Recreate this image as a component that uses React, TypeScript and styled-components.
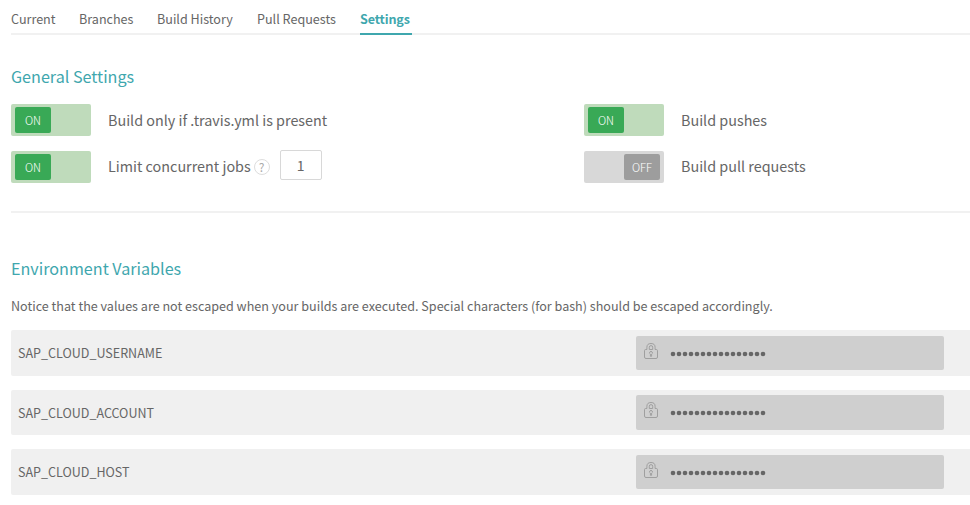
import React from "react";
import styled, { createGlobalStyle } from "styled-components";

const GlobalStyle = createGlobalStyle`
  *, *::before, *::after { box-sizing: border-box; }
  html, body { margin: 0; background: #fff; overflow: hidden; }
  body {
    font-family: "Source Sans Pro", "Noto Sans CJK SC", "Open Sans", sans-serif;
    font-size: 12.58px;
    color: #666;
  }
`;

const Page = styled.main`
  width: 970px;
  height: 505px;
  padding-left: 11px;
  overflow: hidden;
`;

const Tabs = styled.nav`
  display: flex;
  height: 35px;
  border-bottom: 2px solid #f1f1f1;
`;

const Tab = styled.a<{ $width: number; $active?: boolean }>`
  flex: none;
  width: ${(p) => p.$width}px;
  height: 35px;
  margin-right: 24px;
  padding-top: 9px;
  line-height: 20px;
  white-space: nowrap;
  letter-spacing: ${(p) => (p.$active ? -0.15 : 0)}px;
  font-weight: ${(p) => (p.$active ? 600 : 400)};
  color: ${(p) => (p.$active ? "#3fa7ae" : "#666")};
  border-bottom: 2px solid ${(p) => (p.$active ? "#3fa7ae" : "transparent")};
`;

const General = styled.section`
  height: 178px;
  padding-top: 29px;
  border-bottom: 2px solid #f1f1f1;
`;

const Heading = styled.h2`
  margin: 0;
  height: 24px;
  line-height: 24px;
  font-size: 16.15px;
  font-weight: 400;
  color: #3fa7ae;
`;

const SettingsGrid = styled.div`
  display: grid;
  grid-template-columns: 573px 1fr;
  row-gap: 15px;
  margin-top: 16px;
`;

const Setting = styled.div`
  display: flex;
  height: 32px;
  align-items: center;

  &:nth-child(n + 3) > span:nth-child(2) {
    padding-bottom: 2px;
  }
`;

const Switch = styled.button<{ $on: boolean }>`
  display: flex;
  flex: none;
  justify-content: ${(p) => (p.$on ? "flex-start" : "flex-end")};
  width: 80px;
  height: 32px;
  padding: 3px 4px;
  border: 0;
  border-radius: 2px;
  background: ${(p) => (p.$on ? "#bfdbbb" : "#d8d8d8")};
`;

const Knob = styled.span<{ $on: boolean }>`
  width: 36px;
  height: 26px;
  border-radius: 2px;
  background: ${(p) => (p.$on ? "#39a956" : "#9d9d9d")};
  color: #fff;
  font: 300 11.2px/26px "Source Sans Pro", "Noto Sans CJK SC", sans-serif;
  text-align: center;
`;

const Label = styled.span`
  margin-left: 17px;
  font-size: 14.37px;
  line-height: 30px;
  white-space: nowrap;
`;

const Help = styled.span`
  width: 16px;
  height: 16px;
  margin-left: 3px;
  border: 1px solid #ddd;
  border-radius: 50%;
  font-size: 12px;
  line-height: 14px;
  text-align: center;
  color: #aaa;
`;

const JobLimit = styled.input`
  width: 42px;
  height: 30px;
  margin: 0 0 4px 10px;
  padding: 0;
  border: 1px solid #d8d8d8;
  border-radius: 2px;
  background: #fff;
  color: #666;
  font: 400 14px "Source Sans Pro", "Noto Sans CJK SC", sans-serif;
  text-align: center;
`;

const Environment = styled.section`
  padding-top: 43px;
`;

const Notice = styled.p`
  margin: 16px 0 13px;
  height: 21px;
  line-height: 20px;
  white-space: nowrap;
`;

const Variables = styled.ul`
  display: flex;
  flex-direction: column;
  gap: 14px;
  margin: 0;
  padding: 0;
  list-style: none;
`;

const Variable = styled.li`
  display: flex;
  justify-content: space-between;
  height: 45.6px;
  padding: 5.6px 26px 5.6px 7px;
  border-radius: 2px 0 0 2px;
  background: #f0f0f0;
`;

const Name = styled.span`
  margin-top: 0.4px;
  font-size: 12.54px;
  line-height: 34px;
`;

const Secret = styled.div`
  display: flex;
  width: 308px;
  height: 34.4px;
  padding-left: 8px;
  border-radius: 2px;
  background: #cfcfcf;
`;

const LockSvg = styled.svg`
  flex: none;
  width: 14px;
  height: 18px;
  margin-top: 6px;
`;

const DotsSvg = styled.svg`
  flex: none;
  width: 98px;
  height: 6px;
  margin: 15px 0 0 12px;
`;

const Lock = () => (
  <LockSvg viewBox="0 0 14 18" fill="none" stroke="#9f9f9f">
    <path d="M2.9 7.5V5.3a4.1 3.8 0 0 1 8.2 0v2.2h1.2q1.2 0 1.2 1.2v6.3q0 1.5-1.5 1.5H2q-1.5 0-1.5-1.5V8.7q0-1.2 1.2-1.2z" />
    <path d="M5.3 7.5V5.3a1.7 1.7 0 0 1 3.4 0v2.2z" />
    <path d="M6.4 12.1a1.4 1.4 0 1 1 1.2 0v2.2H6.4z" />
  </LockSvg>
);

const MaskedValue = () => (
  <DotsSvg viewBox="0 0 98 6" fill="#666" role="img" aria-label="Hidden value">
    {Array.from({ length: 16 }, (_, i) => (
      <circle key={i} cx={3 + i * 6} cy={3} r={2.3} />
    ))}
  </DotsSvg>
);

const Toggle = ({ on }: { on: boolean }) => (
  <Switch $on={on} type="button" aria-pressed={on}>
    <Knob $on={on}>{on ? "ON" : "OFF"}</Knob>
  </Switch>
);

const variables = ["SAP_CLOUD_USERNAME", "SAP_CLOUD_ACCOUNT", "SAP_CLOUD_HOST"];

export default function App() {
  return (
    <>
      <GlobalStyle />
      <Page>
        <Tabs>
          <Tab $width={44}>Current</Tab>
          <Tab $width={54}>Branches</Tab>
          <Tab $width={76}>Build History</Tab>
          <Tab $width={79}>Pull Requests</Tab>
          <Tab $width={52} $active>Settings</Tab>
        </Tabs>
        <General>
          <Heading>General Settings</Heading>
          <SettingsGrid>
            <Setting>
              <Toggle on />
              <Label>Build only if .travis.yml is present</Label>
            </Setting>
            <Setting>
              <Toggle on />
              <Label>Build pushes</Label>
            </Setting>
            <Setting>
              <Toggle on />
              <Label>Limit concurrent jobs</Label>
              <Help>?</Help>
              <JobLimit defaultValue="1" aria-label="Concurrent jobs" />
            </Setting>
            <Setting>
              <Toggle on={false} />
              <Label>Build pull requests</Label>
            </Setting>
          </SettingsGrid>
        </General>
        <Environment>
          <Heading>Environment Variables</Heading>
          <Notice>
            Notice that the values are not escaped when your builds are executed. Special characters (for bash) should be escaped accordingly.
          </Notice>
          <Variables>
            {variables.map((name) => (
              <Variable key={name}>
                <Name>{name}</Name>
                <Secret>
                  <Lock />
                  <MaskedValue />
                </Secret>
              </Variable>
            ))}
          </Variables>
        </Environment>
      </Page>
    </>
  );
}
